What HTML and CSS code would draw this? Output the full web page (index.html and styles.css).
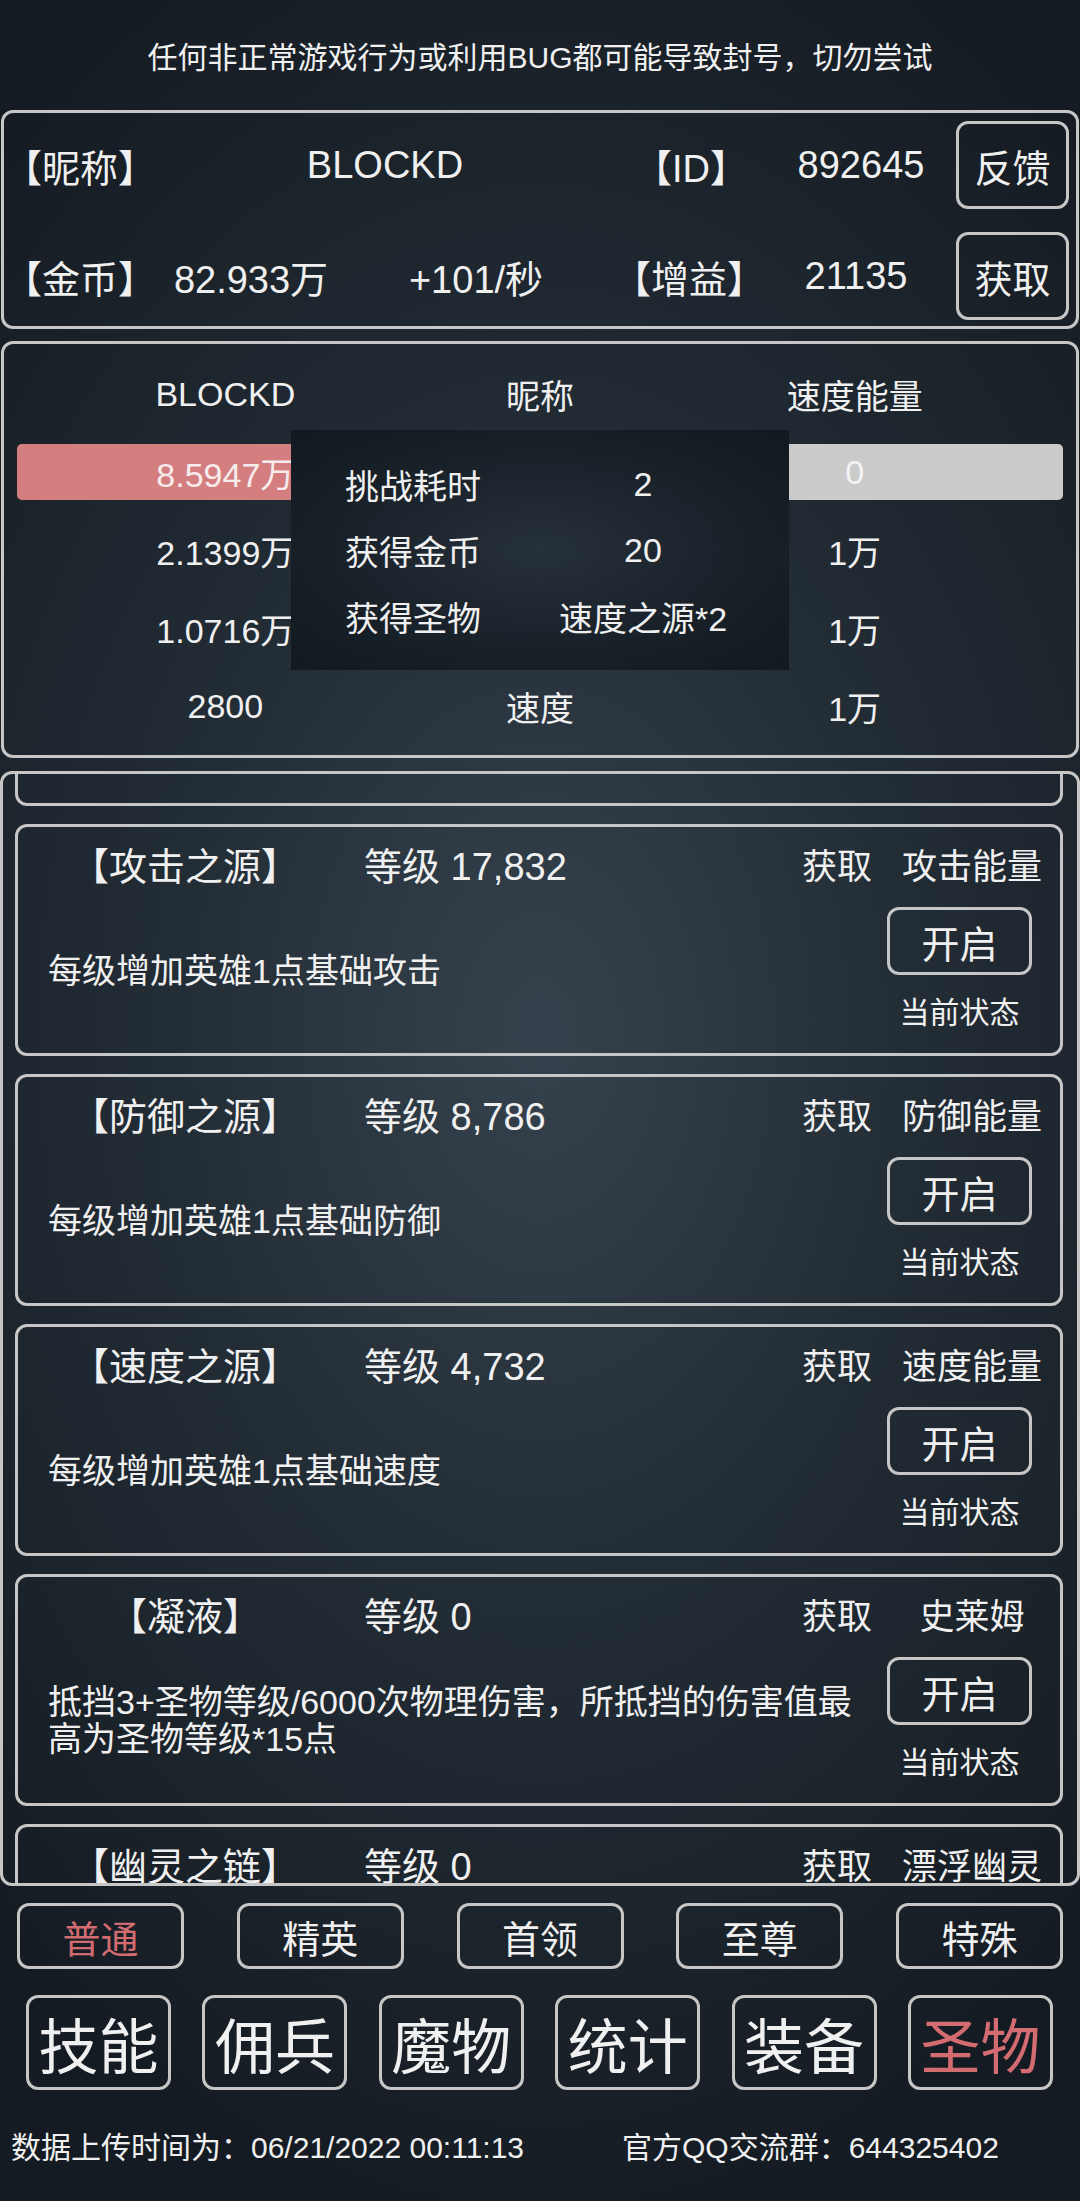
FILE: index.html
```html
<!DOCTYPE html>
<html lang="zh-CN">
<head>
    <meta charset="UTF-8">
    <meta name="viewport" content="width=device-width, initial-scale=1.0">
    <title>圣物</title>
    <link rel="stylesheet" href="styles.css">
</head>
<body>
    <div class="notice">任何非正常游戏行为或利用BUG都可能导致封号，切勿尝试</div>

    <div class="player">
        <div class="prow prow-1">
            <span class="cell c-name-lbl">【昵称】</span>
            <span class="cell c-name">BLOCKD</span>
            <span class="cell c-id-lbl">【ID】</span>
            <span class="cell c-id">892645</span>
            <button class="pbtn">反馈</button>
        </div>
        <div class="prow prow-2">
            <span class="cell c-gold-lbl">【金币】</span>
            <span class="cell c-gold">82.933万</span>
            <span class="cell c-rate">+101/秒</span>
            <span class="cell c-buff-lbl">【增益】</span>
            <span class="cell c-buff">21135</span>
            <button class="pbtn">获取</button>
        </div>
    </div>

    <div class="battle">
        <div class="trow">
            <span>BLOCKD</span>
            <span>昵称</span>
            <span>速度能量</span>
        </div>
        <div class="bar-row">
            <div class="bar">
                <span class="bar-left">8.5947万</span>
                <span></span>
                <span class="bar-right">0</span>
            </div>
        </div>
        <div class="trow">
            <span>2.1399万</span>
            <span></span>
            <span>1万</span>
        </div>
        <div class="trow">
            <span>1.0716万</span>
            <span></span>
            <span>1万</span>
        </div>
        <div class="trow">
            <span>2800</span>
            <span>速度</span>
            <span>1万</span>
        </div>

        <!-- 挑战结果弹窗 -->
        <div class="popup">
            <span>挑战耗时</span><span class="pv">2</span>
            <span>获得金币</span><span class="pv">20</span>
            <span>获得圣物</span><span class="pv">速度之源*2</span>
        </div>
    </div>

    <div class="relics">
        <div class="relics-track" id="relicList"></div>
    </div>

    <div class="tabs">
        <button class="tab active">普通</button>
        <button class="tab">精英</button>
        <button class="tab">首领</button>
        <button class="tab">至尊</button>
        <button class="tab">特殊</button>
    </div>

    <div class="nav">
        <button class="nav-btn">技能</button>
        <button class="nav-btn">佣兵</button>
        <button class="nav-btn">魔物</button>
        <button class="nav-btn">统计</button>
        <button class="nav-btn">装备</button>
        <button class="nav-btn active">圣物</button>
    </div>

    <div class="footer">
        <span>数据上传时间为：06/21/2022 00:11:13</span>
        <span>官方QQ交流群：644325402</span>
    </div>

    <script>
        // 列表已向下滚动，第一项只露出底边
        const relics = [
            { name: "【生命之源】", level: "9,120", source: "生命能量", desc: "每级增加英雄10点基础生命", scrolled: true },
            { name: "【攻击之源】", level: "17,832", source: "攻击能量", desc: "每级增加英雄1点基础攻击" },
            { name: "【防御之源】", level: "8,786", source: "防御能量", desc: "每级增加英雄1点基础防御" },
            { name: "【速度之源】", level: "4,732", source: "速度能量", desc: "每级增加英雄1点基础速度" },
            { name: "【凝液】", level: "0", source: "史莱姆", desc: "抵挡3+圣物等级/6000次物理伤害，所抵挡的伤害值最高为圣物等级*15点" },
            { name: "【幽灵之链】", level: "0", source: "漂浮幽灵", desc: "每级增加英雄1点闪避" }
        ];

        const list = document.getElementById('relicList');
        relics.forEach(r => {
            const item = document.createElement('div');
            item.className = r.scrolled ? 'relic relic-scrolled' : 'relic';
            item.innerHTML = `
                <div class="relic-head">
                    <span class="relic-name">${r.name}</span>
                    <span class="relic-level">等级 ${r.level}</span>
                    <span class="relic-get">获取</span>
                    <span class="relic-src">${r.source}</span>
                </div>
                <div class="relic-body">
                    <div class="relic-desc">${r.desc}</div>
                    <div class="relic-state">
                        <button class="relic-btn">开启</button>
                        <span class="state-lbl">当前状态</span>
                    </div>
                </div>
            `;
            list.appendChild(item);
        });
    </script>
</body>
</html>
```

FILE: styles.css
```css
* {
    box-sizing: border-box;
}
html, body {
    margin: 0;
}
body {
    width: 1080px;
    height: 2201px;
    overflow: hidden;
    font-family: "Liberation Sans", "Noto Sans CJK SC", sans-serif;
    color: #f0f0f0;
    background: radial-gradient(ellipse 75% 55% at 50% 47%, #35424d 0%, #232d36 45%, #151b22 100%);
}
button {
    font-family: inherit;
    color: inherit;
    background: transparent;
    padding: 0;
    cursor: pointer;
}

.notice {
    height: 110px;
    display: flex;
    align-items: center;
    justify-content: center;
    font-size: 30px;
}

/* player card */
.player {
    margin: 0 1px;
    height: 219px;
    border: 3px solid #c6c6c6;
    border-radius: 12px;
    display: grid;
    grid-template-rows: 88px 88px;
    row-gap: 23px;
    padding: 8px 7px 0 0;
    font-size: 38px;
}
.prow {
    display: flex;
    align-items: center;
}
.cell {
    text-align: center;
    white-space: nowrap;
}
.c-name-lbl, .c-gold-lbl {
    width: 150px;
    text-align: left;
}
.c-name { width: 462px; }
.c-id-lbl { width: 150px; }
.c-id { width: 190px; }
.c-gold { width: 194px; }
.c-rate { width: 256px; }
.c-buff-lbl { width: 170px; }
.c-buff { width: 164px; }
.pbtn {
    margin-left: auto;
    width: 113px;
    height: 88px;
    border: 3px solid #c6c6c6;
    border-radius: 12px;
    font-size: 38px;
}

/* battle info */
.battle {
    position: relative;
    margin: 12px 1px 0;
    height: 417px;
    border: 3px solid #c6c6c6;
    border-radius: 12px;
    padding-top: 11px;
    font-size: 34px;
}
.trow {
    display: grid;
    grid-template-columns: repeat(3, 1fr);
    align-items: center;
    text-align: center;
    height: 78px;
    padding: 0 64px;
}
.bar-row {
    height: 78px;
    display: flex;
    align-items: center;
    padding: 0 13px;
}
.bar {
    width: 100%;
    height: 56px;
    border-radius: 5px;
    background: linear-gradient(to right, #d47e80 50%, #cbcbcb 50%);
    display: grid;
    grid-template-columns: repeat(3, 1fr);
    align-items: center;
    text-align: center;
    padding: 0 51px;
}
.bar-left { color: #f7ecec; }
.bar-right { color: #f4f4f4; }
.popup {
    position: absolute;
    left: 287px;
    top: 86px;
    width: 498px;
    height: 240px;
    background: radial-gradient(ellipse at 50% 50%, #27313b 0%, #182028 60%, #121920 100%);
    display: grid;
    grid-template-columns: 136px 244px;
    grid-auto-rows: 66px;
    column-gap: 40px;
    align-items: center;
    padding: 21px 0 0 54px;
}
.pv {
    text-align: center;
}

/* relic list */
.relics {
    margin-top: 13px;
    height: 1115px;
    border: 3px solid #c6c6c6;
    border-radius: 12px;
    overflow: hidden;
}
.relics-track {
    margin-top: -200px;
    padding: 0 14px 0 12px;
}
.relic {
    height: 232px;
    border: 3px solid #c6c6c6;
    border-radius: 12px;
    margin-bottom: 18px;
}
.relic-scrolled .state-lbl {
    visibility: hidden;
}
.relic-head {
    height: 72px;
    display: flex;
    align-items: center;
    font-size: 38px;
    white-space: nowrap;
}
.relic-name {
    width: 334px;
    text-align: center;
}
.relic-level {
    width: 450px;
    padding-left: 12px;
}
.relic-get {
    width: 72px;
    font-size: 35px;
}
.relic-src {
    width: 160px;
    margin-left: 18px;
    text-align: center;
    font-size: 35px;
}
.relic-body {
    display: flex;
    height: 154px;
}
.relic-desc {
    flex: 1;
    display: flex;
    align-items: center;
    padding: 0 0 10px 30px;
    font-size: 34px;
    line-height: 37px;
}
.relic-state {
    width: 200px;
    display: flex;
    flex-direction: column;
    align-items: center;
    padding: 8px 1px 0 0;
    font-size: 30px;
}
.relic-btn {
    width: 145px;
    height: 68px;
    border: 3px solid #c6c6c6;
    border-radius: 12px;
    font-size: 38px;
    margin-bottom: 13px;
}

/* difficulty tabs */
.tabs {
    margin-top: 17px;
    display: flex;
    justify-content: space-between;
    padding: 0 17px;
}
.tab {
    width: 167px;
    height: 66px;
    border: 3px solid #c6c6c6;
    border-radius: 12px;
    font-size: 38px;
}
.tab.active, .nav-btn.active {
    color: #d26c70;
}

/* main nav */
.nav {
    margin-top: 26px;
    display: flex;
    justify-content: space-between;
    padding: 0 27px 0 26px;
}
.nav-btn {
    width: 145px;
    height: 95px;
    border: 3px solid #c6c6c6;
    border-radius: 12px;
    font-size: 60px;
}

.footer {
    margin-top: 33px;
    display: grid;
    grid-template-columns: 611px 1fr;
    padding-left: 11px;
    font-size: 30px;
}
```
